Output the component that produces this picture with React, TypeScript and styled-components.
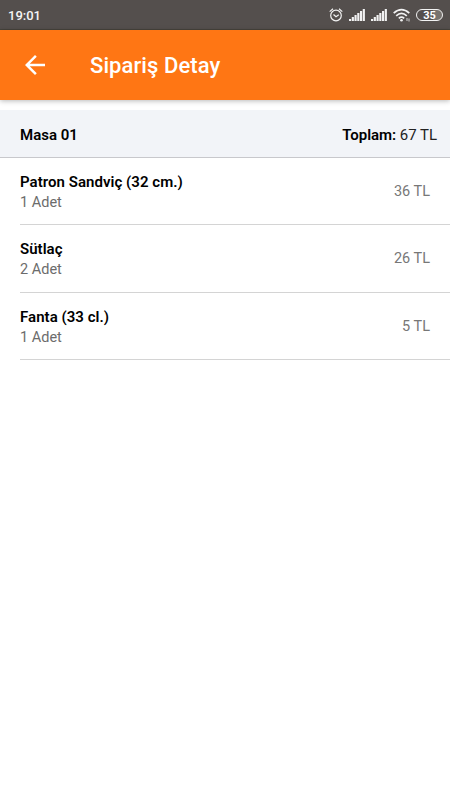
import React from 'react';
import styled, { createGlobalStyle } from 'styled-components';

const Global = createGlobalStyle`
  * { box-sizing: border-box; }
  body { margin: 0; background: #fff; font-family: Roboto, sans-serif; }
`;
const Screen = styled.div`width: 450px; height: 800px; background: #fff; overflow: hidden;`;
const StatusBar = styled.div`
  height: 30px; background: #544f4d; color: #fff; display: flex; align-items: center;
  justify-content: space-between; padding: 0 7px 0 8px; font-size: 13px; font-weight: 500;
  line-height: 29px; border-bottom: 1px solid #47443c;
`;
const Clock = styled.span`padding-top: 2px; color: #f5f5f5;`;
const StatusIcons = styled.div`display: flex; align-items: center; height: 16px; padding-top: 1px;`;
const Glyph = styled.svg<{ $gap?: number }>`display: block; margin-right: ${(p) => p.$gap ?? 0}px; flex: none;`;
const Battery = styled.div`
  width: 27px; height: 12px; border: 1px solid #f2f2f2; border-radius: 6px;
  display: flex; align-items: center; justify-content: center; color: #fff;
  background: linear-gradient(90deg, transparent 65%, #77736f 65%);
  font-size: 11px; font-weight: 700; line-height: 12px; padding-top: 1px;
`;
const AppBar = styled.header`
  height: 70px; background: #ff7614; color: #fff; display: flex; align-items: center;
  padding-left: 20px; box-shadow: 0 1px 5px rgba(0,0,0,.28);
`;
const BackIcon = styled.svg`width: 30px; height: 30px; margin-right: 40px; fill: #fff;`;
const Title = styled.h1`margin: 0; padding-top: 1px; font-size: 22px; font-weight: 500; line-height: 30px; letter-spacing: 0.08px;`;
const Summary = styled.section`
  margin-top: 10px; height: 47.5px; background: #f2f4f8; border-bottom: 1px solid #c8c8cc;
  display: flex; align-items: center; justify-content: space-between; padding: 4px 13px 0 20px;
  font-size: 15px; line-height: 20px; color: #222;
`;
const Strong = styled.strong`font-weight: 600; color: #000;`;
const Total = styled.span`font-weight: 400; letter-spacing: -0.03px;`;
const Row = styled.article`
  margin-left: 20px; height: 67.5px; border-bottom: 1px solid #d4d4d4; display: flex;
  align-items: center; justify-content: space-between; padding: 0.5px 20px 0 0;
`;
const Details = styled.div`padding-top: 3.5px;`;
const Name = styled.div`font-size: 15px; font-weight: 600; line-height: 20px; color: #000; letter-spacing: 0.04px;`;
const Quantity = styled.div`font-size: 14.5px; font-weight: 400; line-height: 22px; color: #6c6c6c;`;
const Price = styled.div`font-size: 14.5px; font-weight: 400; line-height: 20px; color: #777; padding-top: 1px;`;

const items = [
  { name: 'Patron Sandviç (32 cm.)', count: 1, price: 36 },
  { name: 'Sütlaç', count: 2, price: 26 },
  { name: 'Fanta (33 cl.)', count: 1, price: 5 },
];

function Signal({ gap }: { gap: number }) {
  return (
    <Glyph $gap={gap} width="16" height="12" viewBox="0 0 16 12" fill="#f2f2f2">
      {[2, 4, 6, 8, 10, 12].map((h, i) => (
        <rect key={h} x={i * 2.75} y={12 - h} width="2.15" height={h} />
      ))}
    </Glyph>
  );
}

export default function App() {
  return (
    <Screen>
      <Global />
      <StatusBar>
        <Clock>19:01</Clock>
        <StatusIcons>
          <Glyph $gap={6} width="14" height="14" viewBox="0 0 14 14" fill="none" stroke="#f2f2f2" strokeWidth="1.2">
            <circle cx="7" cy="7.5" r="5.3" />
            <path d="M.7 3.6L4 .8M13.3 3.6L10 .8M4.5 6.5L7 8.8l2.8-2.1" />
          </Glyph>
          <Signal gap={6} />
          <Signal gap={6} />
          <Glyph $gap={5} width="18" height="14" viewBox="0 0 18 14" fill="none" stroke="#f2f2f2" strokeWidth="1.7">
            <path d="M.7 5.2Q8.5-1.8 16.3 5.2M3.2 7.8Q8.5 3 13.8 7.8M5.8 10.4Q8.5 8 11.2 10.4" />
            <circle cx="8.5" cy="12.2" r="1.3" fill="#f2f2f2" stroke="none" />
            <path d="M14 10v3M16 10.5v3" strokeWidth="1" opacity=".8" />
          </Glyph>
          <Battery>35</Battery>
        </StatusIcons>
      </StatusBar>
      <AppBar>
        <BackIcon viewBox="0 0 24 24"><path d="M20 11H7.83l5.59-5.59L12 4l-8 8 8 8 1.41-1.41L7.83 13H20v-2z" /></BackIcon>
        <Title>Sipariş Detay</Title>
      </AppBar>
      <Summary><Strong>Masa 01</Strong><Total><Strong>Toplam:</Strong> 67 TL</Total></Summary>
      {items.map((item) => (
        <Row key={item.name}>
          <Details><Name>{item.name}</Name><Quantity>{item.count} Adet</Quantity></Details>
          <Price>{item.price} TL</Price>
        </Row>
      ))}
    </Screen>
  );
}
